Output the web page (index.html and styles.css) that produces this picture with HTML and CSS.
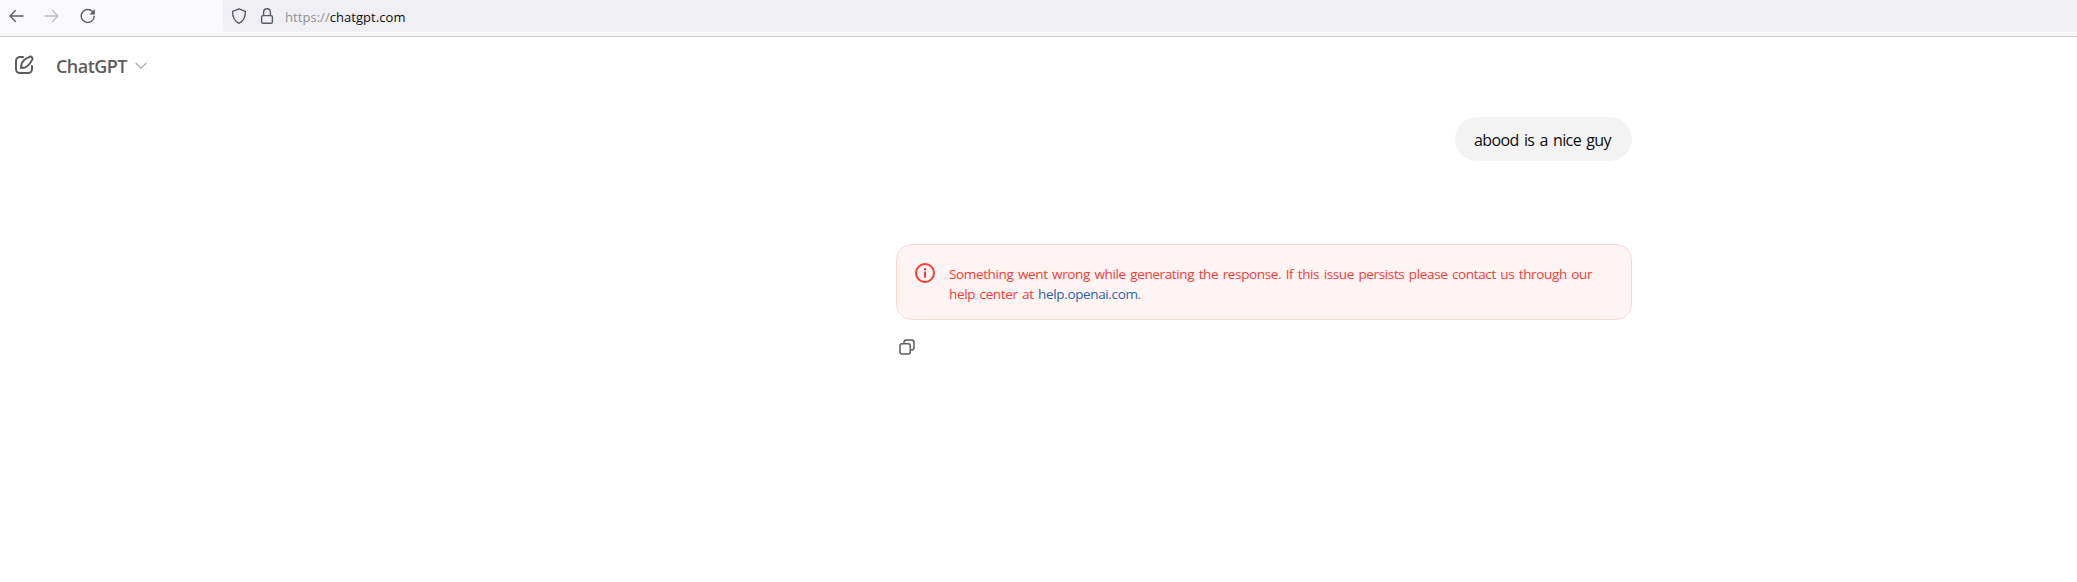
FILE: index.html
```html
<!DOCTYPE html>
<html lang="en">
<head>
<meta charset="utf-8">
<title>ChatGPT</title>
<link rel="stylesheet" href="styles.css">
</head>
<body>
<div class="toolbar">
  <div class="nav">
    <svg width="16" height="16" viewBox="0 0 16 16"><path d="M15 8H2M7.500 2.500 2 8l5.500 5.500"/></svg>
    <svg class="disabled" width="16" height="16" viewBox="0 0 16 16"><path d="M1 8h13M8.500 2.500 14 8l-5.500 5.500"/></svg>
    <svg width="16" height="16" viewBox="0 0 16 16"><path d="M14.200 8.200A6.500 6.500 0 1 1 12.500 3.600"/><path class="solid" d="M14.900 1v5.400H9.500z"/></svg>
  </div>
  <div class="address">
    <svg width="16" height="16" viewBox="0 0 16 16"><path d="M8 .8 14.400 3.300C14.500 8.800 12.700 13 8 15.300 3.300 13 1.500 8.800 1.600 3.300z"/></svg>
    <svg width="16" height="16" viewBox="0 0 16 16"><rect x="2.600" y="7.600" width="10.800" height="7.700" rx="1.300"/><path d="M4.600 7.500V4.200a3.400 3.400 0 0 1 6.800 0v3.300"/></svg>
    <span class="url"><span class="scheme">https://</span>chatgpt.com</span>
  </div>
</div>
<header class="header">
  <svg class="compose" width="24" height="24" viewBox="0 0 24 24"><path d="M11 4H8.500C5 4 4 5 4 8.500v7C4 19 5 20 8.500 20h7c3.500 0 4.500-1 4.500-4.500V13"/><path d="M17 4.200a2 2 0 0 1 2.900 2.900c-1.400 2.900-4 6.100-6.800 7.300L9 15l.6-4.100c1-2.800 4.500-5.500 7.400-6.700z"/></svg>
  <span class="model">ChatGPT</span>
  <svg class="chevron" width="12" height="8" viewBox="0 0 12 8"><path d="m1.200 1.500 4.800 4.800 4.800-4.800"/></svg>
</header>
<main class="thread">
  <div class="bubble">abood is a nice guy</div>
  <div class="error">
    <svg class="info" width="20" height="20" viewBox="0 0 20 20"><circle cx="10" cy="10" r="9"/><path d="M10 8.400V14.800"/><circle class="dot" cx="10" cy="6" r="1.200"/></svg>
    <div class="message">Something went wrong while generating the response. If this issue persists please contact us through our<br>help center at <a>help.openai.com</a>.</div>
  </div>
  <svg class="copy" width="16" height="16" viewBox="0 0 16 16"><path d="M5 4.500V3.300C5 1.600 5.600 1 7.300 1h5.400C14.400 1 15 1.600 15 3.300v5.400c0 1.700-.6 2.300-2.300 2.300h-1.200"/><rect x="1" y="4.700" width="10.300" height="10.300" rx="2"/></svg>
</main>
</body>
</html>
```
FILE: styles.css
```css
body { margin: 0; background: #fff; font-family: "Open Sans", "Noto Sans", sans-serif; color: #0d0d0d; }
svg { display: block; flex: none; fill: none; stroke: #5b5b66; stroke-width: 1.4; stroke-linecap: round; stroke-linejoin: round; }
.toolbar { display: flex; height: 36px; background: #f9f9fb; border-bottom: 1px solid #cbcbce; }
.nav { display: flex; gap: 20px; padding: 8px 0 0 8px; width: 223px; box-sizing: border-box; }
.disabled { stroke: #bdbdc1; }
.solid { fill: #5b5b66; stroke: none; }
.address { flex: 1; display: flex; align-items: center; gap: 12px; height: 32px; padding-left: 8px; background: #f0eff4; border-radius: 0 0 0 4px; }
.url { margin-left: -2px; font-size: 13px; line-height: 20px; letter-spacing: .05px; white-space: nowrap; padding-top: 2px; }
.scheme { color: #8f8f98; }
.header { display: flex; align-items: center; height: 56px; padding-left: 12px; }
.compose { stroke: #5d5d5d; stroke-width: 2; }
.model { margin: 1px 0 0 20px; font-size: 18px; font-weight: 600; line-height: 28px; letter-spacing: -.55px; color: #5d5d5d; }
.chevron { margin: 2px 0 0 8px; stroke: #b4b4b4; stroke-width: 1.500; }
.thread { display: flex; flex-direction: column; align-items: flex-start; width: 736px; margin: 24px 0 0 896px; }
.bubble { align-self: flex-end; box-sizing: border-box; width: 177px; height: 44px; padding: 11px 0 0 19px; border-radius: 22px; background: #f3f3f3; font-size: 16px; line-height: 24px; letter-spacing: -.6px; word-spacing: 1.6px; white-space: nowrap; }
.error { display: flex; box-sizing: border-box; width: 736px; height: 76px; margin-top: 83px; padding: 18px; border: 1px solid #fcd5d5; border-radius: 16px; background: #fff4f4; color: #f93a37; }
.info { stroke: #f93a37; stroke-width: 2; }
.info path { stroke-width: 2; stroke-linecap: butt; }
.info .dot { fill: #f93a37; stroke: none; }
.message { margin: 1px 0 0 14px; font-size: 13.500px; line-height: 20px; letter-spacing: -.36px; word-spacing: 1.300px; white-space: nowrap; }
.message a { color: #2964aa; }
.copy { margin: 19px 0 0 3px; stroke: #5d5d5d; stroke-width: 1.500; }
```
